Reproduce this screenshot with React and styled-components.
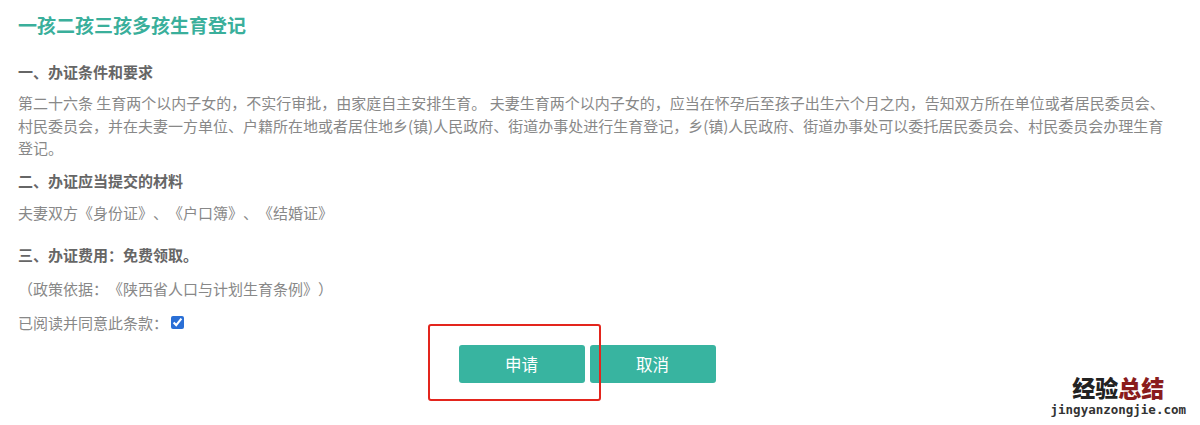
import React, { useState } from "react";
import styled, { createGlobalStyle } from "styled-components";

const GlobalStyle = createGlobalStyle`
  html, body {
    margin: 0;
    padding: 0;
    background: #ffffff;
  }
  body {
    font-family: "Noto Sans CJK SC", "Noto Sans", sans-serif;
    text-spacing-trim: space-all;
  }
`;

const Page = styled.div`
  position: relative;
  width: 1200px;
  height: 425px;
  overflow: hidden;
  box-sizing: border-box;
  padding: 11px 30px 0 18px;
  background: #fff;
`;

const Title = styled.h1`
  margin: 0;
  font-size: 19px;
  line-height: 28px;
  font-weight: 700;
  color: #3aaf9b;
`;

const Heading = styled.h2`
  margin: ${(p) => p.$top || 0}px 0 0;
  font-size: 15px;
  line-height: 22px;
  font-weight: 700;
  color: #666;
`;

const Text = styled.p`
  margin: ${(p) => p.$top || 0}px 0 0;
  font-size: 15px;
  line-height: 22.5px;
  color: #888;
`;

const AgreeRow = styled.label`
  display: flex;
  align-items: center;
  margin-top: 11px;
  height: 22px;
  font-size: 15px;
  color: #888;
`;

const Check = styled.input`
  width: 13px;
  height: 13px;
  margin: 0 0 0 3px;
  accent-color: #2a6fd6;
`;

const Actions = styled.div`
  display: flex;
  justify-content: center;
  gap: 5px;
  margin-top: 11px;
  padding-right: 14px;
`;

const Button = styled.button`
  width: 126px;
  height: 38px;
  border: none;
  border-radius: 3px;
  background: #38b4a0;
  color: #fff;
  font-family: "Noto Sans CJK SC", sans-serif;
  font-size: 16.5px;
  cursor: pointer;
`;

const Highlight = styled.div`
  position: absolute;
  left: 428px;
  top: 324px;
  width: 173px;
  height: 77px;
  box-sizing: border-box;
  border: 2.5px solid #e3251d;
  border-radius: 3px;
  pointer-events: none;
`;

const Watermark = styled.div`
  position: absolute;
  right: 14px;
  top: 374px;
  display: flex;
  flex-direction: column;
  align-items: center;
`;

const MarkTitle = styled.div`
  font-family: "Noto Sans CJK SC", sans-serif;
  font-size: 23px;
  line-height: 26px;
  font-weight: 900;
  color: #222;

  span {
    color: #8a1c1c;
  }
`;

const MarkUrl = styled.div`
  margin-top: 3px;
  font-family: "DejaVu Sans Mono", monospace;
  font-size: 12.5px;
  line-height: 14px;
  font-weight: 700;
  color: #333;
`;

export default function App() {
  const [agreed, setAgreed] = useState(true);

  return (
    <>
      <GlobalStyle />
      <Page>
        <Title>一孩二孩三孩多孩生育登记</Title>

        <Heading $top={22}>一、办证条件和要求</Heading>
        <Text $top={9}>
          第二十六条 生育两个以内子女的，不实行审批，由家庭自主安排生育。 夫妻生育两个以内子女的，应当在怀孕后至孩子出生六个月之内，告知双方所在单位或者居民委员会、村民委员会，并在夫妻一方单位、户籍所在地或者居住地乡(镇)人民政府、街道办事处进行生育登记，乡(镇)人民政府、街道办事处可以委托居民委员会、村民委员会办理生育登记。
        </Text>

        <Heading $top={10}>二、办证应当提交的材料</Heading>
        <Text $top={10}>夫妻双方《身份证》、《户口簿》、《结婚证》</Text>

        <Heading $top={20}>三、办证费用：免费领取。</Heading>
        <Text $top={12}>（政策依据：《陕西省人口与计划生育条例》）</Text>

        <AgreeRow>
          已阅读并同意此条款：
          <Check
            type="checkbox"
            checked={agreed}
            onChange={(e) => setAgreed(e.target.checked)}
          />
        </AgreeRow>

        <Actions>
          <Button>申请</Button>
          <Button>取消</Button>
        </Actions>

        <Highlight />

        <Watermark>
          <MarkTitle>
            经验<span>总结</span>
          </MarkTitle>
          <MarkUrl>jingyanzongjie.com</MarkUrl>
        </Watermark>
      </Page>
    </>
  );
}
